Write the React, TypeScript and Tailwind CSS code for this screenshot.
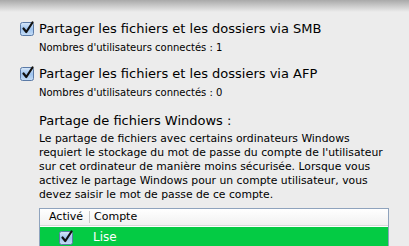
const font = { fontFamily: '"DejaVu Sans", "Liberation Sans", sans-serif' };

function AquaCheck() {
  return (
    <svg width="15" height="15" viewBox="0 0 15 15" className="shrink-0">
      <defs>
        <linearGradient id="cb" x1="0" y1="0" x2="0" y2="1">
          <stop offset="0" stopColor="#d9e8f8" />
          <stop offset="0.5" stopColor="#9ec3ee" />
          <stop offset="1" stopColor="#c6ddf6" />
        </linearGradient>
      </defs>
      <rect x="0.5" y="1.5" width="13" height="13" rx="2" fill="url(#cb)" stroke="#5b7aa6" />
      <path d="M3.5 7.5 L6.3 11 L12.5 1.5" fill="none" stroke="#111" strokeWidth="2.2" strokeLinecap="round" strokeLinejoin="round" />
    </svg>
  );
}

function ShareOption({ label, count }: { label: string; count: number }) {
  return (
    <div className="flex flex-col">
      <div className="flex items-center gap-[4px] pl-[20px] h-[16px]">
        <AquaCheck />
        <span className="text-[13px] text-black leading-none">{label}</span>
      </div>
      <p className="pl-[39px] mt-[7px] text-[10px] text-black leading-none">
        Nombres d'utilisateurs connectés : {count}
      </p>
    </div>
  );
}

const lines = [
  'Le partage de fichiers avec certains ordinateurs Windows',
  "requiert le stockage du mot de passe du compte de l'utilisateur",
  'sur cet ordinateur de manière moins sécurisée. Lorsque vous',
  'activez le partage Windows pour un compte utilisateur, vous',
  'devez saisir le mot de passe de ce compte.',
];

export default function App() {
  return (
    <div className="relative w-[409px] h-[246px] overflow-hidden bg-[#ececec]" style={font}>
      {/* sheet shadow */}
      <div className="absolute inset-x-0 top-0 h-[12px] bg-gradient-to-b from-[#a9a9a9] to-transparent" />

      <div className="relative flex flex-col pt-[20px]">
        <ShareOption label="Partager les fichiers et les dossiers via SMB" count={1} />
        <div className="mt-[12px]">
          <ShareOption label="Partager les fichiers et les dossiers via AFP" count={0} />
        </div>

        <div className="pl-[39px] mt-[16px]">
          <p className="text-[13px] leading-none text-black">Partage de fichiers Windows :</p>
          <div className="mt-[5px] text-[10.8px] leading-[14px] text-black">
            {lines.map((l) => (
              <p key={l} className="whitespace-nowrap">{l}</p>
            ))}
          </div>
        </div>

        <div className="ml-[39px] mt-[6px] w-[350px] border border-[#8fa3bd] bg-white">
          <div className="flex items-center h-[17px] text-[11px] text-black bg-gradient-to-b from-white to-[#f1f1f1] border-b border-[#d8d8d8]">
            <span className="pl-[9px] w-[49px]">Activé</span>
            <span className="h-[12px] border-l border-[#c8c8c8]" />
            <span className="pl-[4px]">Compte</span>
          </div>
          <div className="flex items-center h-[20px] bg-[#04cb44] mt-[1px]">
            <span className="pl-[19px] w-[53px] flex items-center">
              <AquaCheck />
            </span>
            <span className="text-[12px] text-white">Lise</span>
          </div>
        </div>
      </div>
    </div>
  );
}
